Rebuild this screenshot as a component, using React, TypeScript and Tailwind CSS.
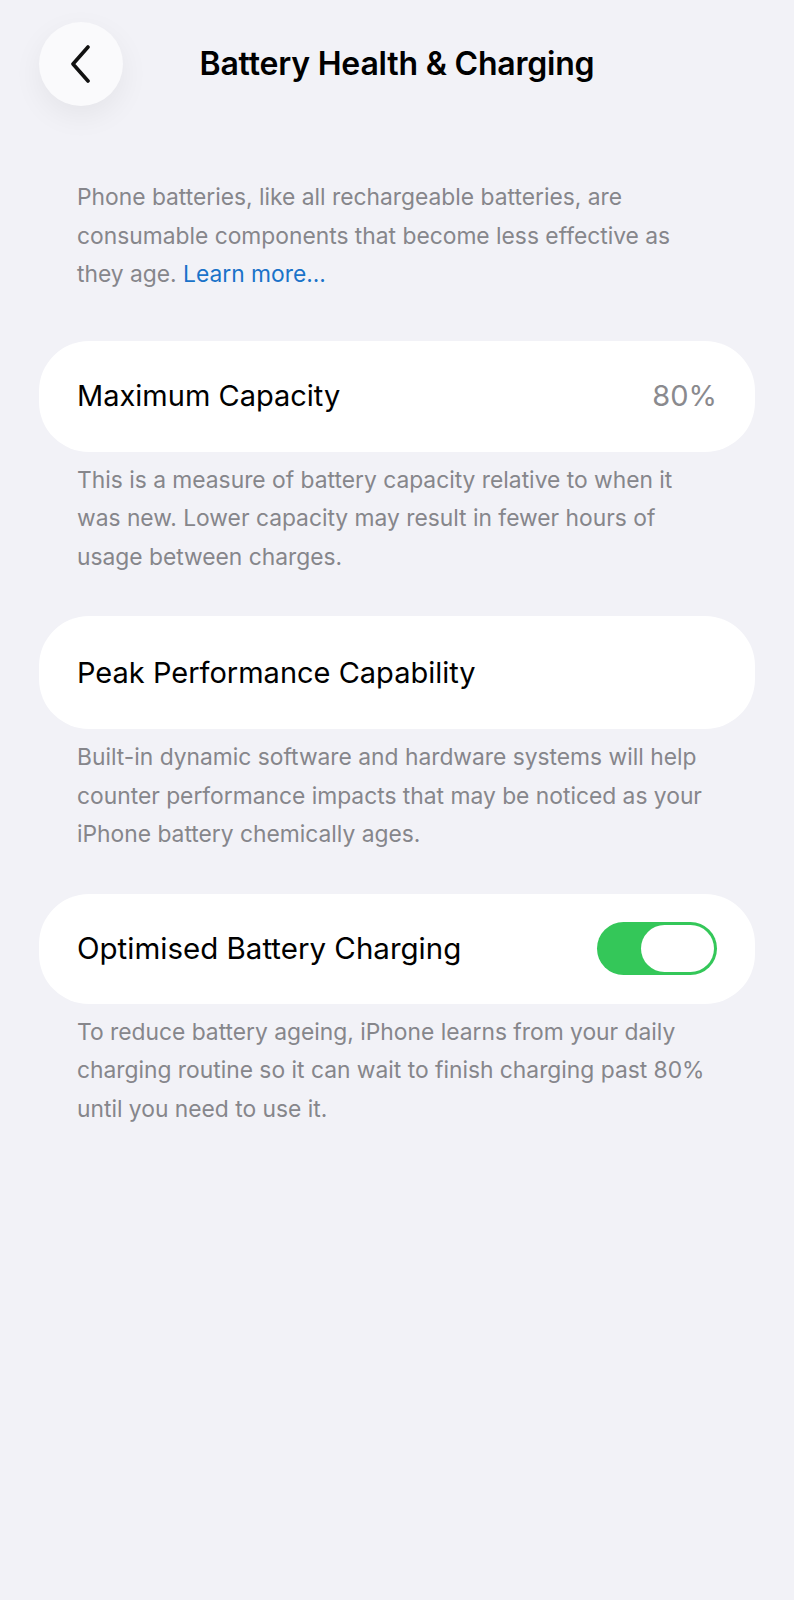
import { useState } from "react";

const font = { fontFamily: "Inter, 'Noto Sans', sans-serif" };

// footnotes break where the settings screen breaks them
function Footnote({ lines }: { lines: React.ReactNode[] }) {
  return (
    <p className="whitespace-nowrap px-[38px] pt-[9px] text-[22.8px] leading-[38.5px] text-[#86868b]">
      {lines.map((l, i) => (
        <span key={i} className="block">
          {l}
        </span>
      ))}
    </p>
  );
}

function Toggle({ on, onChange }: { on: boolean; onChange: (v: boolean) => void }) {
  return (
    <button
      onClick={() => onChange(!on)}
      className={`flex h-[53px] w-[120px] items-center rounded-full p-[3px] ${
        on ? "justify-end bg-[#34c759]" : "justify-start bg-[#e5e5ea]"
      }`}
    >
      <span className="h-[47px] w-[73px] rounded-full bg-white" />
    </button>
  );
}

export default function App() {
  const [optimised, setOptimised] = useState(true);

  return (
    <div className="min-h-[1600px] bg-[#f2f2f7] px-[39px] pt-[22px]" style={font}>
      {/* Header */}
      <div className="relative flex h-[84px] items-center justify-center">
        <button className="absolute left-0 top-0 flex h-[84px] w-[84px] items-center justify-center rounded-full bg-[#fafafc] shadow-[0_10px_30px_rgba(0,0,0,0.06)]">
          <svg width="26" height="38" viewBox="0 0 26 38" fill="none">
            <path
              d="M20 2 L5 19 L20 36"
              stroke="#111"
              strokeWidth="3.6"
              strokeLinecap="round"
              strokeLinejoin="round"
            />
          </svg>
        </button>
        <h1 className="text-[32px] font-semibold tracking-[-0.2px] text-black">
          Battery Health &amp; Charging
        </h1>
      </div>

      <div className="mt-[63px]">
        <Footnote
          lines={[
            "Phone batteries, like all rechargeable batteries, are",
            "consumable components that become less effective as",
            <>
              they age. <span className="text-[#1a73c9]">Learn more...</span>
            </>,
          ]}
        />
      </div>

      {/* Maximum Capacity */}
      <div className="mt-[47px] flex h-[111px] items-center justify-between rounded-[50px] bg-white px-[38px]">
        <span className="text-[29px] text-black">Maximum Capacity</span>
        <span className="text-[29px] text-[#8a8a8e]">80%</span>
      </div>
      <Footnote
        lines={[
          "This is a measure of battery capacity relative to when it",
          "was new. Lower capacity may result in fewer hours of",
          "usage between charges.",
        ]}
      />

      {/* Peak Performance */}
      <div className="mt-[40px] flex h-[113px] items-center rounded-[50px] bg-white px-[38px]">
        <span className="text-[29px] text-black">Peak Performance Capability</span>
      </div>
      <Footnote
        lines={[
          "Built-in dynamic software and hardware systems will help",
          "counter performance impacts that may be noticed as your",
          "iPhone battery chemically ages.",
        ]}
      />

      {/* Optimised Charging */}
      <div className="mt-[40px] flex h-[110px] items-center justify-between rounded-[50px] bg-white px-[38px]">
        <span className="text-[29.5px] text-black">Optimised Battery Charging</span>
        <Toggle on={optimised} onChange={setOptimised} />
      </div>
      <Footnote
        lines={[
          "To reduce battery ageing, iPhone learns from your daily",
          "charging routine so it can wait to finish charging past 80%",
          "until you need to use it.",
        ]}
      />
    </div>
  );
}
